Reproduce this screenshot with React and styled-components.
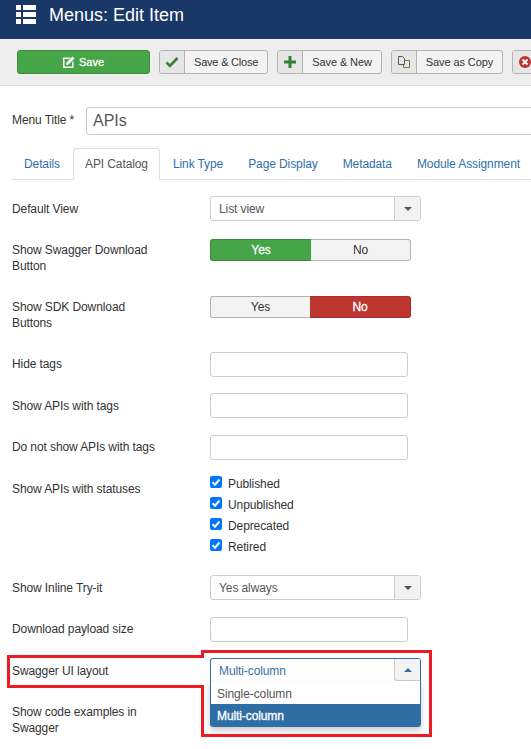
import React from 'react';
import styled, { createGlobalStyle } from 'styled-components';

const GlobalStyle = createGlobalStyle`
  html, body {
    margin: 0;
    padding: 0;
    background: #fff;
    overflow: hidden;
  }
  body {
    font-family: "Liberation Sans", Arial, sans-serif;
    font-size: 12px;
    letter-spacing: -0.1px;
    color: #333;
  }
`;

const Page = styled.div`
  position: relative;
  width: 531px;
  height: 749px;
  overflow: hidden;
`;

const Header = styled.header`
  height: 39px;
  background: #1a3867;
  display: flex;
  align-items: center;
  padding: 0 0 9px 16px;
  box-sizing: border-box;
`;

const PageTitle = styled.h1`
  margin: 0 0 0 13px;
  font-size: 18px;
  font-weight: 400;
  letter-spacing: 0;
  color: #fff;
`;

const Toolbar = styled.div`
  height: 47px;
  box-sizing: border-box;
  background: #eee;
  border-bottom: 1px solid #ddd;
  display: flex;
  align-items: center;
  gap: 9px;
  padding-left: 17px;
  white-space: nowrap;
`;

const SaveButton = styled.div`
  width: 133px;
  height: 24px;
  box-sizing: border-box;
  flex: none;
  display: flex;
  align-items: center;
  justify-content: center;
  gap: 4px;
  background: #46a546;
  border: 1px solid #3d8b3d;
  border-radius: 3px;
  color: #fff;
  font-size: 11px;
  letter-spacing: 0;
  -webkit-text-stroke: 0.3px #fff;
`;

const ToolButton = styled.div`
  height: 24px;
  box-sizing: border-box;
  flex: none;
  display: flex;
  background: #f3f3f3;
  border: 1px solid #b3b3b3;
  border-radius: 3px;
  font-size: 11px;
  overflow: hidden;
`;

const ToolIcon = styled.span`
  width: 25px;
  flex: none;
  box-sizing: border-box;
  display: flex;
  align-items: center;
  justify-content: center;
  background: #e6e6e6;
  border-right: 1px solid #b3b3b3;
`;

const ToolLabel = styled.span`
  display: flex;
  align-items: center;
  padding: 0 9px;
  letter-spacing: ${(p) => p.$spacing ?? -0.1}px;
`;

const Content = styled.main`
  padding: 21px 0 0 12px;
`;

const TitleRow = styled.div`
  display: flex;
  align-items: center;
`;

const TitleLabel = styled.label`
  width: 74px;
  flex: none;
  margin-top: -2px;
  white-space: nowrap;
`;

const TitleInput = styled.div`
  width: 500px;
  height: 28px;
  flex: none;
  box-sizing: border-box;
  display: flex;
  align-items: center;
  padding-left: 6px;
  border: 1px solid #ccc;
  border-radius: 3px;
  font-size: 16px;
  letter-spacing: 0;
  color: #555;
`;

const Tabs = styled.nav`
  display: flex;
  height: 32px;
  box-sizing: border-box;
  margin-top: 13px;
  border-bottom: 1px solid #ddd;
  white-space: nowrap;
`;

const Tab = styled.div`
  height: 32px;
  flex: none;
  box-sizing: border-box;
  margin-right: 1px;
  padding: 0 11px;
  display: flex;
  align-items: center;
  color: ${(p) => (p.$active ? '#555' : '#3071a9')};
  background: ${(p) => (p.$active ? '#fff' : 'transparent')};
  border: 1px solid ${(p) => (p.$active ? '#ddd' : 'transparent')};
  border-bottom: 1px solid ${(p) => (p.$active ? '#fff' : 'transparent')};
  border-radius: 4px 4px 0 0;
`;

const Form = styled.div`
  margin-top: 16px;
`;

const Row = styled.div`
  display: flex;
  height: ${(p) => p.$h}px;
`;

const Label = styled.label`
  width: 198px;
  flex: none;
  box-sizing: border-box;
  padding: ${(p) => p.$top ?? 5}px 50px 0 0;
  line-height: 16px;
`;

const TextInput = styled.div`
  width: 198px;
  height: 25px;
  box-sizing: border-box;
  border: 1px solid #ccc;
  border-radius: 3px;
  background: #fff;
`;

const Select = styled.div`
  position: relative;
  width: 211px;
  height: 25px;
  box-sizing: border-box;
  display: flex;
  align-items: center;
  justify-content: space-between;
  border: 1px solid ${(p) => (p.$open ? '#2f6ea5' : '#ccc')};
  border-bottom-color: ${(p) => (p.$open ? 'transparent' : '#ccc')};
  border-radius: 3px;
  background: #fff;
  color: ${(p) => (p.$open ? '#3a70a3' : '#555')};
  padding-left: 8px;
`;

const SelectArrow = styled.span`
  width: 26px;
  height: ${(p) => (p.$open ? '22px' : '23px')};
  align-self: flex-start;
  box-sizing: border-box;
  flex: none;
  display: flex;
  align-items: center;
  justify-content: center;
  background: #f3f3f3;
  border-left: 1px solid #ccc;
  border-bottom: ${(p) => (p.$open ? '1px solid #ccc' : '0')};
  border-radius: ${(p) => (p.$open ? '0 0 0 3px' : '0 2px 2px 0')};
`;

const Caret = styled.i`
  width: 0;
  height: 0;
  border-left: 4px solid transparent;
  border-right: 4px solid transparent;
  border-top: ${(p) => (p.$up ? '0' : '4px solid #555')};
  border-bottom: ${(p) => (p.$up ? '4px solid #3a70a3' : '0')};
`;

const Options = styled.ul`
  position: absolute;
  left: -1px;
  right: -1px;
  top: 22px;
  margin: 0;
  padding: 0;
  list-style: none;
  background: #fff;
  border-left: 1px solid #2f6ea5;
  border-right: 1px solid #2f6ea5;
  border-radius: 0 0 3px 3px;
  box-shadow: 0 4px 6px rgba(0, 0, 0, 0.2);
  z-index: 2;
`;

const Option = styled.li`
  height: 23px;
  display: flex;
  align-items: ${(p) => (p.$selected ? 'center' : 'flex-end')};
  padding: 0 0 ${(p) => (p.$selected ? 0 : 3)}px 6px;
  box-sizing: border-box;
  color: ${(p) => (p.$selected ? '#fff' : '#555')};
  background: ${(p) => (p.$selected ? '#2f6ea5' : 'transparent')};
  -webkit-text-stroke: ${(p) => (p.$selected ? '0.3px #fff' : '0')};
  border-radius: ${(p) => (p.$selected ? '0 0 2px 2px' : '0')};
`;

const Toggle = styled.div`
  display: flex;
  width: 201px;
  height: 22px;
`;

const ToggleOption = styled.div`
  flex: ${(p) => (p.$on ? '0 0 101px' : '1')};
  box-sizing: border-box;
  display: flex;
  align-items: center;
  justify-content: center;
  border: 1px solid ${(p) => p.$border};
  background: ${(p) => p.$bg};
  color: ${(p) => p.$color};
  -webkit-text-stroke: ${(p) => (p.$on ? `0.3px ${p.$color}` : '0')};
  &:first-child {
    border-radius: 3px 0 0 3px;
    border-right: 0;
  }
  &:last-child {
    border-radius: 0 3px 3px 0;
    border-left: 0;
  }
`;

const Checks = styled.div`
  display: flex;
  flex-direction: column;
`;

const CheckRow = styled.div`
  height: 21px;
  display: flex;
  align-items: center;
  gap: 6px;
`;

const Box = styled.span`
  width: 12px;
  height: 12px;
  margin-top: -3px;
  flex: none;
  display: flex;
  align-items: center;
  justify-content: center;
  background: #0075ff;
  border-radius: 2px;
`;

const Annotation = styled.svg`
  position: absolute;
  left: 0;
  top: 0;
  pointer-events: none;
  z-index: 3;
`;

const ListIcon = () => (
  <svg width="20" height="20" viewBox="0 0 20 20" fill="#fff">
    <rect x="0" y="0" width="5" height="5" />
    <rect x="7" y="0" width="13" height="5" />
    <rect x="0" y="7" width="5" height="5" />
    <rect x="7" y="7" width="13" height="5" />
    <rect x="0" y="14" width="5" height="5" />
    <rect x="7" y="14" width="13" height="5" />
  </svg>
);

const ApplyIcon = () => (
  <svg width="12" height="12" viewBox="0 0 12 12">
    <path d="M0 1.5h7.5L6 3H1.5v7.5h7.5V6.5L10.5 5v7H0z" fill="#fff" />
    <path d="M3.5 6.5 9.5.5l2 2-6 6-2.5.5z" fill="#fff" />
  </svg>
);

const CheckIcon = () => (
  <svg width="14" height="12" viewBox="0 0 14 12">
    <path d="M1.5 6.5 5 10l7.5-8" fill="none" stroke="#378137" strokeWidth="2.6" />
  </svg>
);

const PlusIcon = () => (
  <svg width="12" height="12" viewBox="0 0 12 12">
    <path d="M4.5 0h3v4.5H12v3H7.500V12h-3V7.500H0v-3h4.500z" fill="#378137" />
  </svg>
);

const CopyIcon = () => (
  <svg width="12" height="12" viewBox="0 0 12 12" fill="#e6e6e6">
    <path d="M5.500 4.500h6v7h-6z" stroke="#6d7f3c" />
    <path d="M.5.500h4l2 2v6h-6z" stroke="#555" />
  </svg>
);

const CancelIcon = () => (
  <svg width="12" height="12" viewBox="0 0 12 12">
    <circle cx="6" cy="6" r="6" fill="#bd362f" />
    <path d="m3.500 3.500 5 5m0-5-5 5" stroke="#fff" strokeWidth="1.800" />
  </svg>
);

const Tick = () => (
  <svg width="10" height="10" viewBox="0 0 10 10">
    <path d="M1.500 5.200 4 7.700 8.500 2.500" fill="none" stroke="#fff" strokeWidth="2" />
  </svg>
);

const App = () => (
  <Page>
    <GlobalStyle />
    <Header>
      <ListIcon />
      <PageTitle>Menus: Edit Item</PageTitle>
    </Header>
    <Toolbar>
      <SaveButton>
        <ApplyIcon />
        Save
      </SaveButton>
      <ToolButton>
        <ToolIcon><CheckIcon /></ToolIcon>
        <ToolLabel $spacing={-0.2}>Save &amp; Close</ToolLabel>
      </ToolButton>
      <ToolButton>
        <ToolIcon><PlusIcon /></ToolIcon>
        <ToolLabel>Save &amp; New</ToolLabel>
      </ToolButton>
      <ToolButton>
        <ToolIcon><CopyIcon /></ToolIcon>
        <ToolLabel>Save as Copy</ToolLabel>
      </ToolButton>
      <ToolButton>
        <ToolIcon><CancelIcon /></ToolIcon>
        <ToolLabel />
      </ToolButton>
    </Toolbar>
    <Content>
      <TitleRow>
        <TitleLabel>Menu Title *</TitleLabel>
        <TitleInput>APIs</TitleInput>
      </TitleRow>
      <Tabs>
        <Tab>Details</Tab>
        <Tab $active>API Catalog</Tab>
        <Tab>Link Type</Tab>
        <Tab>Page Display</Tab>
        <Tab>Metadata</Tab>
        <Tab>Module Assignment</Tab>
      </Tabs>
      <Form>
        <Row $h={43}>
          <Label>Default View</Label>
          <Select>List view<SelectArrow><Caret /></SelectArrow></Select>
        </Row>
        <Row $h={57}>
          <Label $top={3}>Show Swagger Download Button</Label>
          <Toggle>
            <ToggleOption $on $border="#3d8b3d" $bg="#46a546" $color="#fff">Yes</ToggleOption>
            <ToggleOption $border="#b3b3b3" $bg="#f3f3f3" $color="#333">No</ToggleOption>
          </Toggle>
        </Row>
        <Row $h={56}>
          <Label $top={3}>Show SDK Download Buttons</Label>
          <Toggle>
            <ToggleOption $border="#b3b3b3" $bg="#f3f3f3" $color="#333">Yes</ToggleOption>
            <ToggleOption $on $border="#a9302a" $bg="#bd362f" $color="#fff">No</ToggleOption>
          </Toggle>
        </Row>
        <Row $h={41}>
          <Label $top={4}>Hide tags</Label>
          <TextInput />
        </Row>
        <Row $h={42}>
          <Label>Show APIs with tags</Label>
          <TextInput />
        </Row>
        <Row $h={38}>
          <Label $top={4}>Do not show APIs with tags</Label>
          <TextInput />
        </Row>
        <Row $h={102}>
          <Label $top={8}>Show APIs with statuses</Label>
          <Checks>
            {['Published', 'Unpublished', 'Deprecated', 'Retired'].map((s) => (
              <CheckRow key={s}>
                <Box><Tick /></Box>
                {s}
              </CheckRow>
            ))}
          </Checks>
        </Row>
        <Row $h={42}>
          <Label>Show Inline Try-it</Label>
          <Select>Yes always<SelectArrow><Caret /></SelectArrow></Select>
        </Row>
        <Row $h={41}>
          <Label $top={4}>Download payload size</Label>
          <TextInput />
        </Row>
        <Row $h={46}>
          <Label>Swagger UI layout</Label>
          <Select $open>
            Multi-column
            <SelectArrow $open><Caret $up /></SelectArrow>
            <Options>
              <Option>Single-column</Option>
              <Option $selected>Multi-column</Option>
            </Options>
          </Select>
        </Row>
        <Row $h={40}>
          <Label $top={0}>Show code examples in Swagger</Label>
        </Row>
      </Form>
    </Content>
    <Annotation width="531" height="749">
      <path
        d="M8.500 656.500H202.500V651.500H430.500V735.500H202.500V686.500H8.500Z"
        fill="none"
        stroke="#ed1c24"
        strokeWidth="3"
      />
    </Annotation>
  </Page>
);

export default App;
